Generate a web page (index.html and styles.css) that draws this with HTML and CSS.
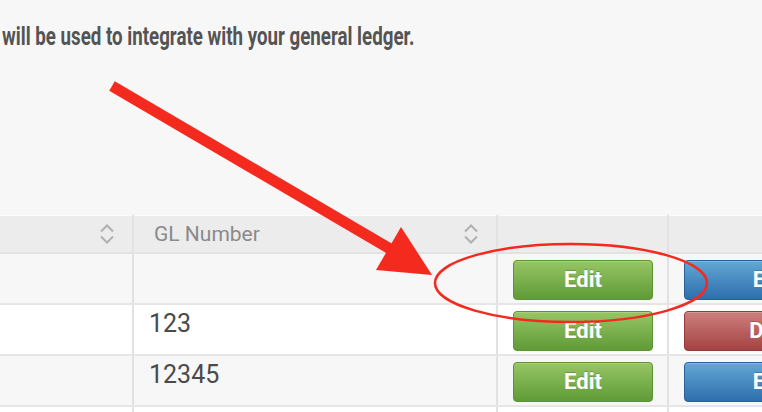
FILE: index.html
```html
<!DOCTYPE html>
<html>
<head>
<meta charset="utf-8">
<link rel="stylesheet" href="styles.css">
</head>
<body>
<p class="intro"><span class="intro-text">will be used to integrate with your general ledger.</span></p>

<table class="gl">
  <colgroup>
    <col class="c1"><col class="c2"><col class="c3"><col class="c4">
  </colgroup>
  <thead>
    <tr>
      <th><div class="th-in"><span></span><svg class="sort" width="16" height="24" viewBox="0 0 16 24"><path d="M2 9.5 L8 3.5 L14 9.5 M2 14.5 L8 20.5 L14 14.5"/></svg></div></th>
      <th><div class="th-in"><span>GL Number</span><svg class="sort" width="16" height="24" viewBox="0 0 16 24"><path d="M2 9.5 L8 3.5 L14 9.5 M2 14.5 L8 20.5 L14 14.5"/></svg></div></th>
      <th></th>
      <th></th>
    </tr>
  </thead>
  <tbody>
    <tr class="odd">
      <td></td>
      <td class="num"></td>
      <td class="act"><button class="btn green">Edit</button></td>
      <td class="act"><button class="btn wide blue">Enable</button></td>
    </tr>
    <tr class="even">
      <td></td>
      <td class="num">123</td>
      <td class="act"><button class="btn green">Edit</button></td>
      <td class="act"><button class="btn wide red">Disable</button></td>
    </tr>
    <tr class="odd">
      <td></td>
      <td class="num">12345</td>
      <td class="act"><button class="btn green">Edit</button></td>
      <td class="act"><button class="btn wide blue">Enable</button></td>
    </tr>
    <tr class="even">
      <td></td>
      <td class="num">123456</td>
      <td class="act"><button class="btn green">Edit</button></td>
      <td class="act"><button class="btn wide blue">Enable</button></td>
    </tr>
  </tbody>
</table>

<svg class="annotation" width="762" height="412" viewBox="0 0 762 412">
  <line x1="112" y1="86" x2="392" y2="250" stroke="#f52a1f" stroke-width="11"/>
  <polygon points="401,227 376,270 432,275" fill="#f52a1f"/>
  <ellipse cx="571" cy="283" rx="136" ry="39" fill="none" stroke="#f52a1f" stroke-width="2.5"/>
</svg>
</body>
</html>
```

FILE: styles.css
```css
html, body {
  margin: 0;
  padding: 0;
  overflow: hidden;
  width: 762px;
  height: 412px;
}

body {
  position: relative;
  background: #f7f7f7;
  font-family: Roboto, "Liberation Sans", sans-serif;
}

.intro {
  margin: 0;
  padding: 20px 0 0 2px;
  height: 215px;
  box-sizing: border-box;
  white-space: nowrap;
  font-size: 26px;
  line-height: 32px;
  font-weight: 700;
  color: #545454;
}

.intro-text {
  display: inline-block;
  transform: scaleX(0.72);
  transform-origin: left center;
}

.gl {
  border-collapse: collapse;
  table-layout: fixed;
  width: 900px;
}

.c1 { width: 133px; }
.c2 { width: 364px; }
.c3 { width: 171px; }
.c4 { width: 232px; }

.gl thead tr { height: 37px; }

.gl th {
  padding: 0 17px 0 20px;
  background: #ececec;
  border-top: 1px solid #fbfbfb;
  border-bottom: 2px solid #e2e2e2;
  border-left: 2px solid #e2e2e2;
  text-align: left;
  font-weight: 400;
  font-size: 21px;
  color: #8a8a8a;
  vertical-align: middle;
}

.gl th:first-child { border-left: none; }

.th-in {
  display: flex;
  justify-content: space-between;
  align-items: center;
}

.sort path {
  fill: none;
  stroke: #b0b0b0;
  stroke-width: 2;
}

.gl tbody tr { height: 51px; }

.gl td {
  padding: 0 15px;
  border-bottom: 2px solid #e6e6e6;
  border-left: 2px solid #e2e2e2;
  vertical-align: top;
}

.gl td:first-child { border-left: none; }

.odd td { background: #f7f7f7; }
.even td { background: #ffffff; }

.num {
  padding-top: 4px !important;
  font-size: 25px;
  line-height: 30px;
  color: #4a4a4a;
}

.act {
  padding-top: 6px !important;
}

.btn {
  display: block;
  width: 140px;
  height: 40px;
  border-radius: 4px;
  border: 1px solid;
  font-family: Roboto, "Liberation Sans", sans-serif;
  font-weight: 700;
  font-size: 22px;
  color: #ffffff;
  text-shadow: 0 -1px 0 rgba(0, 0, 0, 0.2);
  padding: 0;
  text-align: center;
  box-shadow: inset 0 1px 0 rgba(255, 255, 255, 0.2);
}

.btn.wide { width: 204px; }

.green {
  background: linear-gradient(#97c564, #5f9b38);
  border-color: #5a9533;
}

.blue {
  background: linear-gradient(#62a8d4, #2f6ead);
  border-color: #2b5f9a;
}

.red {
  background: linear-gradient(#cd7f7d, #a44343);
  border-color: #943a3a;
}

.annotation {
  position: absolute;
  left: 0;
  top: 0;
  pointer-events: none;
}
```
